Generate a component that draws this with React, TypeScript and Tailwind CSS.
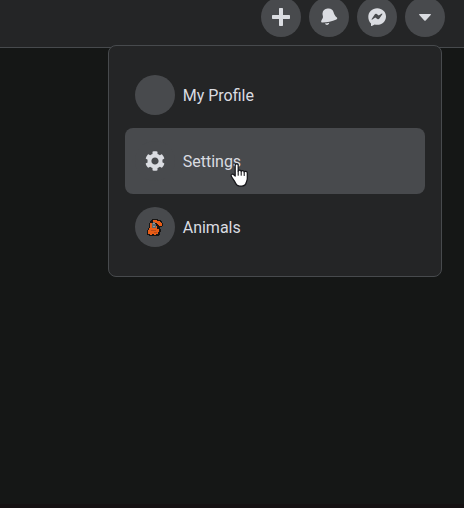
import type { ReactNode } from 'react';

function PlusIcon() {
  return (
    <svg width="18" height="18" viewBox="0 0 18 18" fill="currentColor">
      <path d="M7.700 0h2.600q.7 0 .7.7V7h6.300q.7 0 .7.7v2.600q0 .7-.7.7H11v6.300q0 .7-.7.7H7.700q-.7 0-.7-.7V11H.7q-.7 0-.7-.7V7.700Q0 7 .7 7H7V.7Q7 0 7.700 0Z" />
    </svg>
  );
}

function BellIcon() {
  return (
    <svg width="18" height="18" viewBox="0 0 18 18" fill="currentColor">
      <path d="M2.500 5.600C2.600 2.600 4.800 1 7.500.6c3.200-.5 5.200.9 6 3.500.5 1.700 1 3 2.200 4.300l1.200 1.200c.7.700.3 1.500-.5 1.800-4.500 2-9 2.900-14 3.200-1 0-1.500-.7-1.200-1.500.4-1.300 1.800-2.400 1.800-4C3 7.900 2.400 6.900 2.500 5.600Z" />
      <path d="M4.900 15.500q2.400 0 4.300-.8C9.100 16 8.200 16.900 7 16.900c-1 0-1.700-.5-2.100-1.400Z" />
    </svg>
  );
}

function MessengerIcon() {
  return (
    <svg width="18" height="18" viewBox="0 0 18 18">
      <path fill="#dadce1" d="M9.200.2C14.200.2 18 3.800 18 8.500s-3.800 8.300-8.800 8.300c-.9 0-1.700-.1-2.500-.3l-2.900 1.400c-.5.200-.8 0-.8-.5v-1.800C1.200 14 .3 11.400.3 8.700.3 3.800 4.200.2 9.200.2Z" />
      <path fill="#484a4d" d="m3.700 11 3-4.500c.5-.8 1.300-.9 2-.4l2 1.500 2.900-1.900c.5-.3 1 .1.700.6l-2.900 4.300c-.5.8-1.300.9-2 .4L7.300 9.600l-2.900 2c-.5.300-1-.1-.7-.6Z" />
    </svg>
  );
}

function CaretIcon() {
  return (
    <svg width="12" height="7" viewBox="0 0 12 7" fill="currentColor">
      <path d="M.7 0h10.600c.7 0 .9.500.4 1L6.700 6.400c-.4.400-1 .4-1.400 0L.3 1c-.5-.5-.3-1 .4-1Z" />
    </svg>
  );
}

function CogIcon() {
  return (
    <svg width="20" height="20" viewBox="0 0 512 512" fill="currentColor">
      <path d="M487.400 315.700l-42.600-24.600c4.300-23.200 4.300-47 0-70.200l42.600-24.600c4.900-2.800 7.100-8.600 5.500-14-11.100-35.600-30-67.800-54.700-94.600-3.800-4.100-10-5.100-14.800-2.300L380.800 110c-17.900-15.400-38.500-27.300-60.800-35.100V25.800c0-5.600-3.900-10.500-9.400-11.700-36.700-8.200-74.300-7.800-109.200 0-5.500 1.200-9.400 6.100-9.400 11.700V75c-22.200 7.900-42.800 19.800-60.800 35.100L88.700 85.500c-4.900-2.800-11-1.900-14.800 2.300-24.700 26.700-43.600 58.900-54.700 94.600-1.700 5.400.6 11.200 5.500 14L67.300 221c-4.300 23.200-4.300 47 0 70.200l-42.600 24.600c-4.900 2.800-7.100 8.600-5.500 14 11.100 35.600 30 67.800 54.700 94.600 3.800 4.100 10 5.100 14.800 2.300l42.600-24.600c17.900 15.400 38.500 27.300 60.800 35.100v49.200c0 5.600 3.900 10.500 9.400 11.700 36.700 8.200 74.300 7.800 109.200 0 5.500-1.200 9.400-6.100 9.400-11.700v-49.200c22.200-7.900 42.800-19.800 60.800-35.100l42.600 24.600c4.900 2.800 11 1.900 14.800-2.300 24.700-26.700 43.600-58.900 54.700-94.600 1.500-5.500-.7-11.300-5.600-14.100zM256 348c-50.700 0-92-41.300-92-92s41.300-92 92-92 92 41.300 92 92-41.300 92-92 92z" />
    </svg>
  );
}

function AnimalIcon() {
  return (
    <svg width="18" height="20" viewBox="0 0 18 20">
      <path fill="#171514" d="M6 2h6v1h3v1h1v2h1v3h-1v1h-2v2h1v3h-1v3h-1v1H3v-1H1v-5h1v-2h1V6h1V4h1V3h1Z" />
      <path fill="#e85d17" d="M7 3h4v1h3v1h1v1h1v3h-3V8h-1V7h-1V6H9V5H7ZM4 6h2v5h4V9h1v3h2v3h-1v2h-2v1H8v-1H6v1H4v-1H2v-4h1v-2h1Z" />
      <path fill="#5d696f" d="M7 5h2v2h1v4H6V6h1Z" />
      <path fill="#929999" d="M7 6h2v1H7ZM7 9h2v1H7Z" />
      <path fill="#b94b19" d="M5 13h5v1H5ZM8 15h3v1H8Z" />
    </svg>
  );
}

function HandCursor() {
  return (
    <svg width="20" height="26" viewBox="0 0 20 26">
      <path fill="#fff" stroke="#17171b" strokeWidth="1.250" strokeLinejoin="round" d="M5.200 3.200c0-1.700 3-1.700 3 0v6c.2-1.500 2.900-1.300 3 .3.400-1.300 2.900-1 3 .600.500-1.200 3.100-.8 3.100 1v5.400c0 1.500-.7 2.500-1 4-.5 2-2 3.500-4.300 3.500H9.600c-2.100 0-3.300-1-4-2.700-.8-2-1.800-3.400-3-5-.8-1.100-1.500-2-1.500-2.700 0-1.500 1.700-1.800 2.700-.9l1.400 1.400Z" />
      <path stroke="#17171b" strokeWidth="1.100" strokeLinecap="round" d="M8.200 9v4.200M11.200 9.800v3.400M14.200 10.600v2.800" />
    </svg>
  );
}

function NavButton({ children }: { children: ReactNode }) {
  return (
    <button className="flex size-10 items-center justify-center rounded-full bg-[#484a4d] text-[#dadce1]">
      {children}
    </button>
  );
}

function MenuItem({ icon, label, active = false }: { icon?: ReactNode; label: string; active?: boolean }) {
  return (
    <a className={`flex h-[66px] items-center gap-2 rounded-lg px-2.5 ${active ? 'bg-[#484a4d]' : ''}`}>
      <span className="flex size-10 items-center justify-center rounded-full bg-[#484a4d]">{icon}</span>
      <span className="pt-0.5">{label}</span>
    </a>
  );
}

export default function App() {
  return (
    <div className="relative flex h-[508px] flex-col overflow-hidden bg-[#151716] font-['Roboto',sans-serif] text-base text-[#dadce1]">
      <nav className="flex h-12 shrink-0 justify-end border-b border-[#474a4d] bg-[#242526] pr-[19px]">
        <div className="-mt-[3px] flex gap-2">
          <NavButton><PlusIcon /></NavButton>
          <NavButton><BellIcon /></NavButton>
          <NavButton><MessengerIcon /></NavButton>
          <NavButton><CaretIcon /></NavButton>
        </div>
      </nav>
      <div className="relative z-10 -mt-[3px] mr-[22.300px] w-[334px] self-end rounded-lg border border-[#474a4d] bg-[#242526] p-4">
        <MenuItem label="My Profile" />
        <MenuItem label="Settings" active icon={<CogIcon />} />
        <MenuItem label="Animals" icon={<AnimalIcon />} />
      </div>
      <div className="mt-auto h-1 bg-[#151112]" />
      <div className="absolute left-[230px] top-[162px] z-20">
        <HandCursor />
      </div>
    </div>
  );
}
